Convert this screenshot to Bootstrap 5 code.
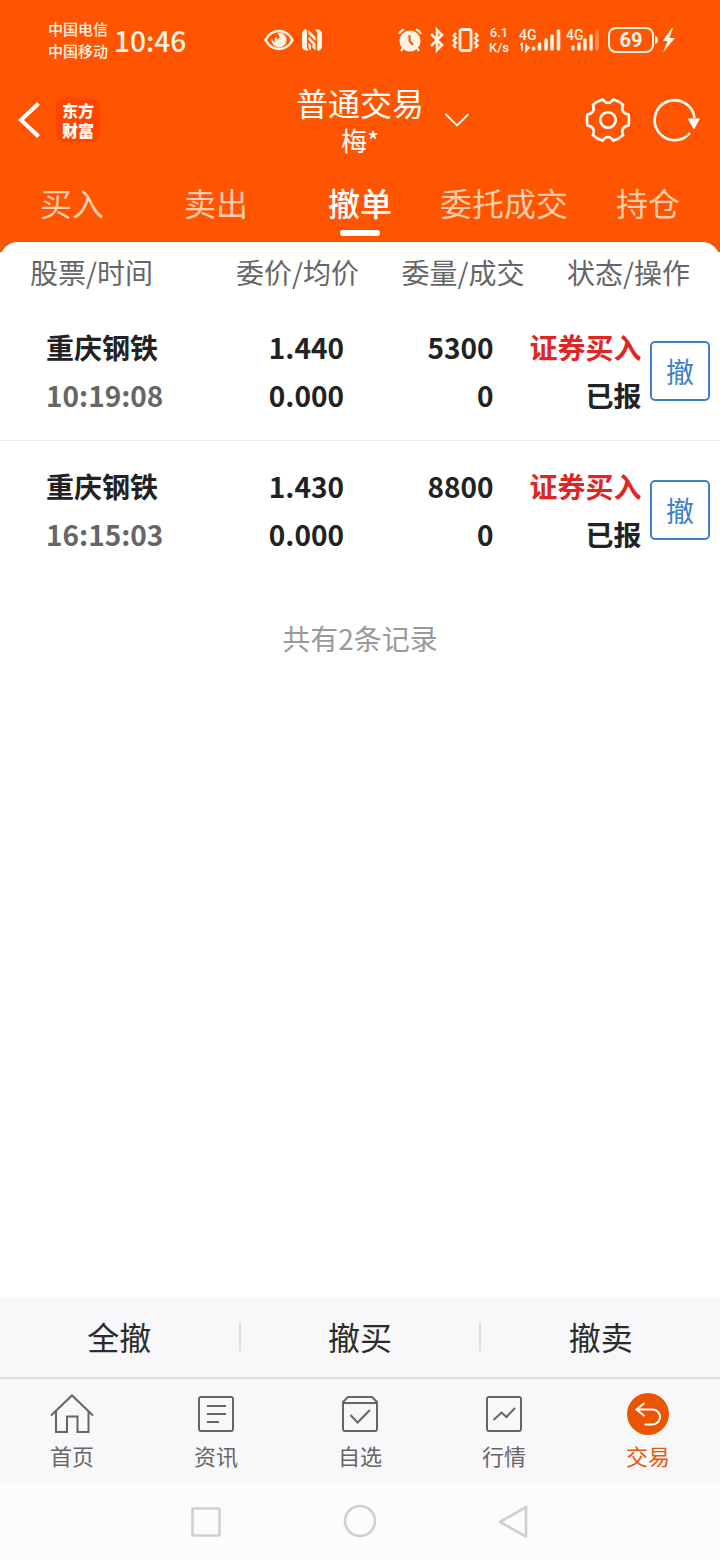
<!DOCTYPE html>
<html lang="zh-CN">
<head>
<meta charset="utf-8">
<meta name="viewport" content="width=device-width, initial-scale=1">
<title>普通交易</title>
<link href="https://cdn.jsdelivr.net/npm/bootstrap@5.3.0/dist/css/bootstrap.min.css" rel="stylesheet">
<style>
  body { font-family: "Noto Sans CJK SC", sans-serif; color: #222; background: #fff; font-size: 28px; line-height: 40px; }
  svg { display: block; flex: none; overflow: visible; }
  svg text { font-family: Roboto, sans-serif; }
  a { color: inherit; text-decoration: none; }
  .plain { border: 0; background: none; padding: 0; color: inherit; }
  .top-area { background: #ff5500; color: #fff; }
  .status-bar { height: 80px; padding: 0 44px 0 48px; color: #fff3e6; }
  .carriers { font-size: 15px; line-height: 22px; font-weight: 500; }
  .clock { font-size: 28px; font-weight: 500; margin-left: 6px; }
  .status-mid { margin-left: 78px; gap: 7px; }
  .net-speed { font-family: Roboto, sans-serif; font-size: 13px; line-height: 15px; font-weight: 500; width: 24px; text-align: center; }
  .app-bar { display: grid; grid-template-columns: 1fr auto 1fr; height: 90px; padding: 0 19px 10px; align-items: center; }
  .brand-tile { width: 44px; height: 44px; border-radius: 9px; background: #ff4400; font-size: 16px; line-height: 20px; font-weight: 900; text-align: center; padding-top: 2px; margin-left: 15px; }
  .app-title { font-size: 32px; line-height: 40px; font-weight: 400; margin: 0; }
  .account { font-size: 26px; line-height: 36px; }
  .account-switch { margin-left: 20px; }
  .refresh { margin-left: 22px; }
  .trade-tabs { height: 72px; font-size: 32px; }
  .trade-tabs a { flex: 1 1 0; text-align: center; padding-top: 12px; color: #ffcdad; white-space: nowrap; line-height: 40px; }
  .trade-tabs a.active { color: #fff; font-weight: 500; }
  .trade-tabs a.active::after { content: ""; display: block; width: 40px; height: 6px; border-radius: 3px; background: #fff; margin: 8px auto 0; }
  .sheet-wrap { background: linear-gradient(#ea5a10 10px, #fff 10px); }
  .sheet { background: #fff; border-radius: 18px 18px 0 0; }
  .orders { width: 100%; table-layout: fixed; border-collapse: separate; border-spacing: 0; }
  .orders th { font-weight: 400; color: #666; height: 60px; text-align: right; white-space: nowrap; }
  .orders th:first-child { text-align: left; padding-left: 30px; }
  .orders th:last-child { padding-right: 30px; }
  .orders td { font-weight: 700; line-height: 48px; height: 139px; text-align: right; vertical-align: middle; white-space: nowrap; border-bottom: 1px solid #ebebeb; }
  .orders tr:last-child td { border-bottom-color: transparent; }
  .orders td:first-child { text-align: left; padding-left: 46px; }
  .orders td:nth-child(2) { padding-right: 16px; }
  .orders td:nth-child(3) { padding-right: 32px; }
  .orders td:nth-child(4) { padding-right: 3px; }
  .orders td:last-child { padding-right: 10px; }
  .time { color: #666; }
  .side-buy { color: #e02525; }
  .btn-cancel { width: 60px; height: 60px; border: 2px solid #3d7fc9; border-radius: 5px; color: #3d7fc9; background: #fff; font-size: 28px; line-height: 40px; padding: 0; }
  .summary { color: #999; padding-top: 38px; }
  .bulk-bar { background: #f8f8fa; height: 82px; border-bottom: 2px solid #dedee0; }
  .bulk-bar button { flex: 1 1 0; font-size: 32px; line-height: 40px; color: #2b2b2b; padding-bottom: 3px; }
  .rule { width: 2px; height: 28px; background: #dedee0; }
  .tab-bar { background: #f8f8fa; height: 103px; color: #666; font-size: 22px; line-height: 32px; }
  .tab-bar a { flex: 1 1 0; padding-top: 14px; gap: 2px; }
  .tab-bar a.active { color: #ea5504; }
  .system-bar { background: #fcfcfc; height: 78px; color: #d0d0d0; }
  .system-keys { width: 64%; }
  .system-keys button { flex: 1 1 0; }
</style>
</head>
<body>
<div class="d-flex flex-column min-vh-100">
  <header class="top-area">
    <div class="status-bar d-flex align-items-center">
      <div class="carriers"><div>中国电信</div><div>中国移动</div></div>
      <div class="clock">10:46</div>
      <div class="status-mid d-flex align-items-center">
        <svg width="30" height="22" viewBox="0 0 30 22" fill="none"><path d="M1.500 11C8-1 22-1 28.500 11C22 23 8 23 1.500 11Z" stroke="currentColor" stroke-width="2.500"/><path d="M15 3.500a7.500 7.500 0 1 1-7 5C8 11 9 13 11 13C10 10 11 8 13 8C12 10 14 11 15 9.500C16 8 15.500 6 13.500 5Z" fill="currentColor"/></svg>
        <svg width="22" height="22" viewBox="0 0 22 22"><path d="M5 0L6 2V19L8 21.500H5Q1 21 1 17V5Q1 1 5 0ZM17 22L16 20V3L14 .5H17Q21 1 21 5V17Q21 21 17 22Z" fill="currentColor"/><path d="M7.500 1L14.500 8V12L7.500 5ZM7.500 7.500L14.500 14.500V21.500L11.500 18.500V15L7.500 11ZM7.500 13.500L10 16V21.500L7.500 19Z" fill="currentColor"/></svg>
      </div>
      <div class="d-flex align-items-center ms-auto">
        <svg width="24" height="24" viewBox="0 0 24 24" fill="none" stroke="currentColor" stroke-width="2.200"><circle cx="12" cy="13" r="10.500" fill="currentColor" stroke="none"/><path d="M1 6Q2 3 6 1.500M23 6Q22 3 18 1.500M5 20L3 23M19 20L21 23"/><path d="M11.500 7V13L15 17" stroke="#ff5500" stroke-width="2"/></svg>
        <svg class="ms-2" width="14" height="24" viewBox="0 0 14 24" fill="none" stroke="currentColor" stroke-width="2.600"><path d="M1 6L12 17L7 22V2L12 7L1 18"/></svg>
        <svg class="ms-2" width="27" height="24" viewBox="0 0 27 24" fill="none" stroke="currentColor" stroke-width="2.400"><rect x="8" y="1.500" width="11" height="21" rx="2" stroke-width="2.800"/><path d="M4 5L1.500 7.500L4 10L1.500 12.500L4 15L1.500 17.500L4 20M23 5L25.500 7.500L23 10L25.500 12.500L23 15L25.500 17.500L23 20"/></svg>
        <div class="net-speed ms-2"><div>6.1</div><div>K/s</div></div>
        <svg class="ms-2" width="42" height="28" viewBox="0 0 42 28" stroke="currentColor" stroke-width="3.600" stroke-linecap="round"><text x="0" y="14" font-size="14" font-weight="500" fill="currentColor" stroke="none">4G</text><path d="M14.500 23V22M20.500 23V18M27 23V14M33 23V10M39.500 23V5"/><path d="M1 19L3 17.500V25M7 17.500V25L10 21.500L7 20" fill="none" stroke-width="1.600" stroke-linecap="butt"/></svg>
        <svg class="ms-1" width="35" height="28" viewBox="0 0 35 28" stroke="currentColor" stroke-width="3.400" stroke-linecap="round"><text x="1" y="14" font-size="14" font-weight="500" fill="currentColor" stroke="none">4G</text><path d="M8 23V21M14 23V18M20 23V14M26 23V10"/><path d="M32 23V5" stroke-opacity=".35"/></svg>
        <svg class="ms-2" width="68" height="26" viewBox="0 0 68 26" fill="none" stroke="currentColor"><rect x="1" y="1" width="44" height="24" rx="7" stroke-width="2"/><text x="23" y="20" text-anchor="middle" font-size="20" font-weight="700" fill="currentColor" stroke="none">69</text><path d="M47.500 9Q51.500 13 47.500 17Z" fill="currentColor" stroke="currentColor"/><path d="M64 1L54.500 14H59.500L55 25.500L67 11H61.500L65 1Z" fill="currentColor" stroke="none"/></svg>
      </div>
    </div>

    <div class="app-bar">
      <div class="d-flex align-items-center">
        <button type="button" class="plain" aria-label="返回"><svg width="22" height="38" viewBox="0 0 22 38" fill="none" stroke="currentColor" stroke-width="4"><path d="M19.500 2.500L2 19L19.500 35.500"/></svg></button>
        <a href="#" class="brand-tile">东方<br>财富</a>
      </div>
      <div class="text-center">
        <h1 class="app-title">普通交易</h1>
        <div class="account">梅*</div>
      </div>
      <div class="d-flex align-items-center">
        <button type="button" class="plain account-switch" aria-label="切换账户"><svg width="26" height="14" viewBox="0 0 26 14" fill="none" stroke="currentColor" stroke-width="1.800"><path d="M1.500 1L13 12.500L24.500 1"/></svg></button>
        <button type="button" class="plain ms-auto" aria-label="设置"><svg width="46" height="46" viewBox="-23 -23 46 46" fill="none" stroke="currentColor" stroke-width="2.600" stroke-linejoin="round"><path d="M20.600 -5.500Q21.500 0 20.600 5.500Q12.100 7 15.100 15.100Q11 19 5.500 20.600Q0 13.500 -5.500 20.600Q-11 19 -15.100 15.100Q-12.100 7 -20.600 5.500Q-21.500 0 -20.600 -5.500Q-12.100 -7 -15.100 -15.100Q-11 -19 -5.500 -20.600Q0 -13.500 5.500 -20.600Q11 -19 15.100 -15.100Q12.100 -7 20.600 -5.500Z"/><circle r="7.800"/></svg></button>
        <button type="button" class="plain refresh" aria-label="刷新"><svg width="48" height="44" viewBox="0 0 48 44" fill="none" stroke="currentColor" stroke-width="2.600"><path d="M41.500 20A20 20 0 1 0 37 35"/><path d="M34.500 20.500H47L41 31.500Z" fill="currentColor" stroke="none"/></svg></button>
      </div>
    </div>

    <nav class="trade-tabs d-flex">
      <a href="#">买入</a>
      <a href="#">卖出</a>
      <a href="#" class="active" aria-current="page">撤单</a>
      <a href="#">委托成交</a>
      <a href="#">持仓</a>
    </nav>
  </header>

  <main class="sheet-wrap flex-grow-1">
    <div class="sheet">
      <table class="orders">
        <colgroup><col style="width:25%"><col style="width:25%"><col style="width:23%"><col style="width:16.500%"><col></colgroup>
        <thead>
          <tr><th scope="col">股票/时间</th><th scope="col">委价/均价</th><th scope="col">委量/成交</th><th scope="col" colspan="2">状态/操作</th></tr>
        </thead>
        <tbody>
          <tr>
            <td>重庆钢铁<div class="time">10:19:08</div></td>
            <td>1.440<br>0.000</td>
            <td>5300<br>0</td>
            <td><span class="side-buy">证券买入</span><br>已报</td>
            <td><button type="button" class="btn-cancel">撤</button></td>
          </tr>
          <tr>
            <td>重庆钢铁<div class="time">16:15:03</div></td>
            <td>1.430<br>0.000</td>
            <td>8800<br>0</td>
            <td><span class="side-buy">证券买入</span><br>已报</td>
            <td><button type="button" class="btn-cancel">撤</button></td>
          </tr>
        </tbody>
      </table>
      <p class="summary text-center mb-0">共有2条记录</p>
    </div>
  </main>

  <footer>
    <div class="bulk-bar d-flex align-items-center">
      <button type="button" class="plain">全撤</button>
      <span class="rule"></span>
      <button type="button" class="plain">撤买</button>
      <span class="rule"></span>
      <button type="button" class="plain">撤卖</button>
    </div>
    <nav class="tab-bar d-flex">
      <a href="#" class="d-flex flex-column align-items-center">
        <svg width="44" height="44" viewBox="0 0 44 44" fill="none" stroke="currentColor" stroke-width="2"><path d="M1 22.500L22 2.500L43 22.500M6 18V39H17V23.500H27.500V39H38.500V18"/></svg>
        首页</a>
      <a href="#" class="d-flex flex-column align-items-center">
        <svg width="44" height="44" viewBox="0 0 44 44" fill="none" stroke="currentColor" stroke-width="2"><rect x="5" y="4" width="34" height="34" rx="2"/><path d="M13 13H32M13 21H32M13 29H25"/></svg>
        资讯</a>
      <a href="#" class="d-flex flex-column align-items-center">
        <svg width="44" height="44" viewBox="0 0 44 44" fill="none" stroke="currentColor" stroke-width="2"><path d="M5 9L10 4H34L39 9V36Q39 38 37 38H7Q5 38 5 36ZM5 10H39M12.500 22L19.500 29.500L32 17"/></svg>
        自选</a>
      <a href="#" class="d-flex flex-column align-items-center">
        <svg width="44" height="44" viewBox="0 0 44 44" fill="none" stroke="currentColor" stroke-width="2"><rect x="5" y="4" width="34" height="34" rx="2"/><path d="M11.500 27L19.500 19.500L24.500 24L33 15"/></svg>
        行情</a>
      <a href="#" class="active d-flex flex-column align-items-center" aria-current="page">
        <svg width="44" height="44" viewBox="0 0 44 44" fill="none" stroke="#fff" stroke-width="2"><circle cx="22" cy="21" r="21" fill="currentColor" stroke="none"/><path d="M18.500 10L10.500 16.500L18.500 23M10.500 16.500H26.500A7.300 7.300 0 0 1 26.500 31.500H18.500"/></svg>
        交易</a>
    </nav>
    <div class="system-bar d-flex justify-content-center align-items-center">
      <div class="system-keys d-flex">
        <button type="button" class="plain d-flex justify-content-center" aria-label="最近任务"><svg width="34" height="34" viewBox="0 0 34 34" fill="none" stroke="currentColor" stroke-width="2.600"><rect x="3.500" y="4.500" width="27" height="27" rx="1"/></svg></button>
        <button type="button" class="plain d-flex justify-content-center" aria-label="主屏幕"><svg width="34" height="34" viewBox="0 0 34 34" fill="none" stroke="currentColor" stroke-width="2.600"><circle cx="17" cy="17" r="15"/></svg></button>
        <button type="button" class="plain d-flex justify-content-center" aria-label="返回上一级"><svg width="34" height="34" viewBox="0 0 34 34" fill="none" stroke="currentColor" stroke-width="2.600" stroke-linejoin="round"><path d="M3 18L29 3V32.500Z"/></svg></button>
      </div>
    </div>
  </footer>
</div>
<script src="https://cdn.jsdelivr.net/npm/bootstrap@5.3.0/dist/js/bootstrap.bundle.min.js"></script>
</body>
</html>
